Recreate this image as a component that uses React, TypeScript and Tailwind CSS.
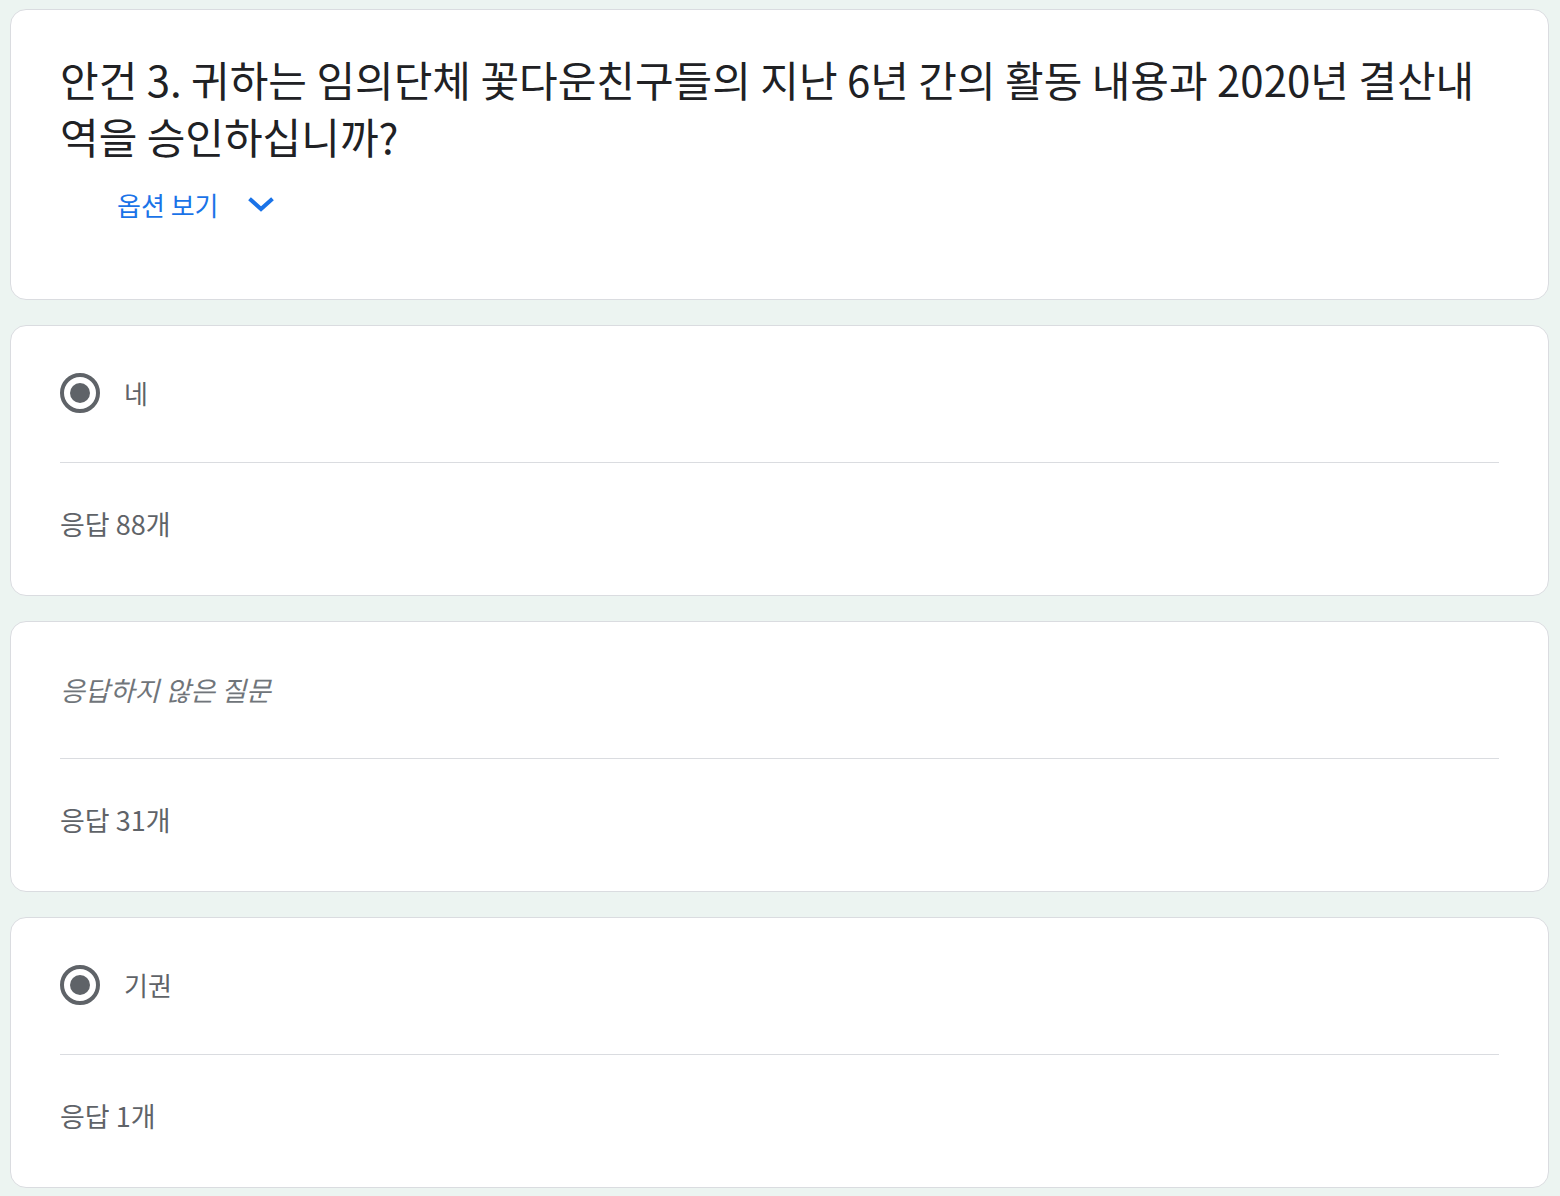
import React from "react";

const font = { fontFamily: '"Noto Sans CJK KR", "Noto Sans", sans-serif' };

function Radio() {
  return (
    <div className="w-[40px] h-[40px] rounded-full border-[4px] border-[#5f6368] flex items-center justify-center shrink-0">
      <div className="w-[20px] h-[20px] rounded-full bg-[#5f6368]" />
    </div>
  );
}

function OptionCard({ label, count, italic }: { label: string; count: string; italic?: boolean }) {
  return (
    <div className="bg-white border border-[#dadce0] rounded-[16px] px-[49px] h-[271px] flex flex-col">
      <div className="h-[137px] flex items-center border-b border-[#dadce0] pb-[2px]">
        {italic ? (
          <span className="text-[27px] italic text-[#70757a] leading-none">{label}</span>
        ) : (
          <div className="flex items-center gap-[24px]">
            <Radio />
            <span className="text-[26px] text-[#5f6368] leading-none">{label}</span>
          </div>
        )}
      </div>
      <div className="flex-1 flex items-center pb-[12px]">
        <span className="text-[27px] text-[#5f6368] leading-none">응답 {count}</span>
      </div>
    </div>
  );
}

export default function App() {
  return (
    <div className="min-h-screen bg-[#ecf4f1] pl-[10px] pr-[11px] pt-[9px] pb-[9px] flex flex-col gap-[25px]" style={font}>
      <div className="bg-white border border-[#dadce0] rounded-[16px] px-[49px] pt-[40px] h-[291px]">
        <div className="text-[42px] leading-[57px] text-[#202124]">
          안건 3. 귀하는 임의단체 꽃다운친구들의 지난 6년 간의 활동 내용과 2020년 결산내역을 승인하십니까?
        </div>
        <div className="flex items-center gap-[29px] pl-[57px] mt-[28px]">
          <span className="text-[26px] text-[#1a73e8] leading-none">옵션 보기</span>
          <svg width="26" height="18" viewBox="0 0 26 18" fill="none">
            <path d="M3 4 L13 13 L23 4" stroke="#1a73e8" strokeWidth="4" strokeLinecap="square" />
          </svg>
        </div>
      </div>
      <OptionCard label="네" count="88개" />
      <OptionCard label="응답하지 않은 질문" count="31개" italic />
      <OptionCard label="기권" count="1개" />
    </div>
  );
}
